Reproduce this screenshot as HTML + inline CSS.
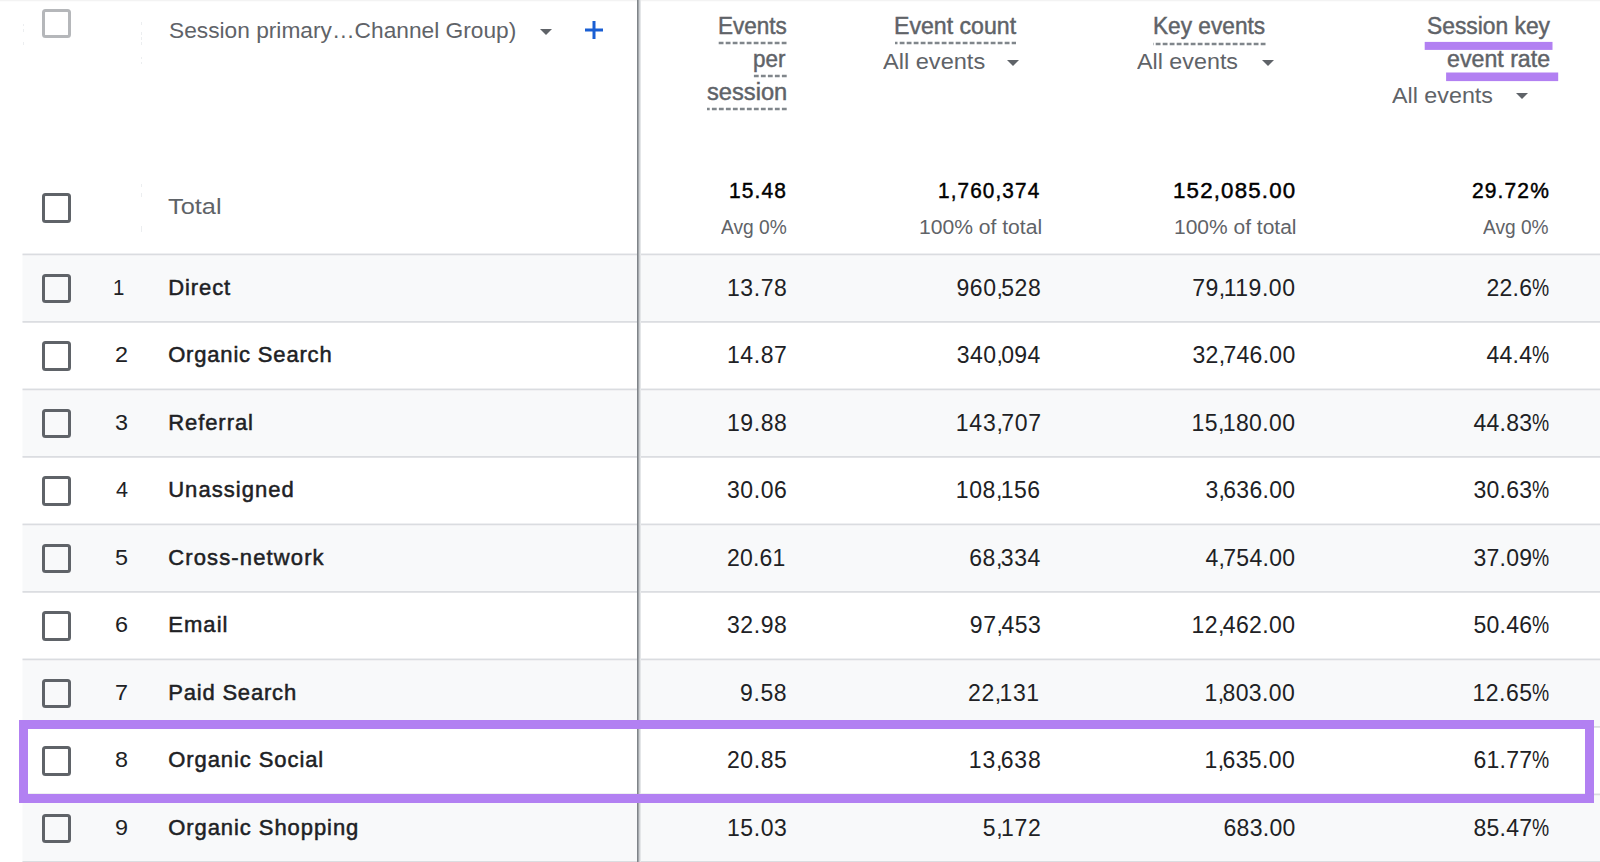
<!DOCTYPE html>
<html><head><meta charset="utf-8"><style>
html,body{margin:0;padding:0;}
body{width:1600px;height:862px;position:relative;overflow:hidden;background:#fff;font-family:"Liberation Sans", sans-serif;}
.t{position:absolute;white-space:nowrap;}
.b{position:absolute;}
.cm{letter-spacing:-1.6px;}
.pc{display:inline-block;transform:scaleX(0.84);transform-origin:0 0;margin-right:-3.2px;}
</style></head><body>
<svg class="b" style="left:0;top:0" width="1600" height="862"><rect x="0" y="0" width="1600.00" height="1.30" fill="#f3f3f3"/></svg>
<svg class="b" style="left:0;top:0" width="1600" height="862" viewBox="0 0 1600 862"><rect x="22.5" y="254.40" width="1577.5" height="67.5" fill="#f8f9fa"/><rect x="22.5" y="389.40" width="1577.5" height="67.5" fill="#f8f9fa"/><rect x="22.5" y="524.40" width="1577.5" height="67.5" fill="#f8f9fa"/><rect x="22.5" y="659.40" width="1577.5" height="67.5" fill="#f8f9fa"/><rect x="22.5" y="794.40" width="1577.5" height="67.5" fill="#f8f9fa"/><rect x="22.5" y="253.55" width="1577.5" height="1.7" fill="#dadce0"/><rect x="22.5" y="321.05" width="1577.5" height="1.7" fill="#dadce0"/><rect x="22.5" y="388.55" width="1577.5" height="1.7" fill="#dadce0"/><rect x="22.5" y="456.05" width="1577.5" height="1.7" fill="#dadce0"/><rect x="22.5" y="523.55" width="1577.5" height="1.7" fill="#dadce0"/><rect x="22.5" y="591.05" width="1577.5" height="1.7" fill="#dadce0"/><rect x="22.5" y="658.55" width="1577.5" height="1.7" fill="#dadce0"/><rect x="22.5" y="726.05" width="1577.5" height="1.7" fill="#dadce0"/><rect x="22.5" y="793.55" width="1577.5" height="1.7" fill="#dadce0"/><rect x="22.5" y="861.05" width="1577.5" height="1.7" fill="#dadce0"/></svg>
<div class="b" style="left:637px;top:0px;width:4.00px;height:862.00px;background:linear-gradient(90deg,#7f8489 0 1px,#a2a6aa 1px 2px,#cdd0d3 2px 3px,#e4e6e8 3px 4px);"></div>
<div class="b" style="left:41.8px;top:8.8px;width:29.50px;height:29.50px;border:3px solid #b5b7ba;border-radius:3.5px;box-sizing:border-box;"></div>
<svg class="b" style="left:540.3px;top:29px" width="12" height="6" viewBox="0 0 12 6"><path d="M0 0H12L6.0 6Z" fill="#5f6368"/></svg>
<svg class="b" style="left:584px;top:20px" width="20" height="20" viewBox="0 0 20 20"><path d="M10 1V19M1 10H19" stroke="#1a5fd3" stroke-width="3"/></svg>
<svg class="b" style="left:717.40px;top:40.30px" width="69.50" height="6" viewBox="0 0 69.50 6"><line x1="69.50" y1="3" x2="0" y2="3" stroke="#80868b" stroke-width="2.5" stroke-dasharray="4.8 2.2"/></svg>
<svg class="b" style="left:753.20px;top:73.20px" width="33.70" height="6" viewBox="0 0 33.70 6"><line x1="33.70" y1="3" x2="0" y2="3" stroke="#80868b" stroke-width="2.5" stroke-dasharray="4.8 2.2"/></svg>
<svg class="b" style="left:707.20px;top:106.20px" width="79.70" height="6" viewBox="0 0 79.70 6"><line x1="79.70" y1="3" x2="0" y2="3" stroke="#80868b" stroke-width="2.5" stroke-dasharray="4.8 2.2"/></svg>
<svg class="b" style="left:894.50px;top:40.30px" width="121.50" height="6" viewBox="0 0 121.50 6"><line x1="121.50" y1="3" x2="0" y2="3" stroke="#80868b" stroke-width="2.5" stroke-dasharray="4.8 2.2"/></svg>
<svg class="b" style="left:1007px;top:60.2px" width="12" height="6" viewBox="0 0 12 6"><path d="M0 0H12L6.0 6Z" fill="#5f6368"/></svg>
<svg class="b" style="left:1153.00px;top:40.50px" width="112.50" height="6" viewBox="0 0 112.50 6"><line x1="112.50" y1="3" x2="0" y2="3" stroke="#80868b" stroke-width="2.5" stroke-dasharray="4.8 2.2"/></svg>
<svg class="b" style="left:1261.7px;top:60.2px" width="12" height="6" viewBox="0 0 12 6"><path d="M0 0H12L6.0 6Z" fill="#5f6368"/></svg>
<svg class="b" style="left:0;top:0" width="1600" height="862"><rect x="1424.7" y="41.9" width="127.80" height="8.00" fill="#b280f2"/></svg>
<svg class="b" style="left:0;top:0" width="1600" height="862"><rect x="1446.1" y="72.5" width="112.10" height="8.60" fill="#b280f2"/></svg>
<svg class="b" style="left:1516px;top:93.2px" width="12" height="6" viewBox="0 0 12 6"><path d="M0 0H12L6.0 6Z" fill="#5f6368"/></svg>
<div class="b" style="left:22.5px;top:24px;width:1.00px;height:2.00px;background:#eceef0;"></div>
<div class="b" style="left:22.5px;top:29px;width:1.00px;height:3.00px;background:#eceef0;"></div>
<div class="b" style="left:22.5px;top:42px;width:1.00px;height:3.00px;background:#eceef0;"></div>
<div class="b" style="left:141px;top:22px;width:1.00px;height:3.00px;background:#eceef0;"></div>
<div class="b" style="left:141px;top:32px;width:1.00px;height:3.00px;background:#eceef0;"></div>
<div class="b" style="left:141px;top:37px;width:1.00px;height:3.00px;background:#eceef0;"></div>
<div class="b" style="left:141px;top:42px;width:1.00px;height:3.00px;background:#eceef0;"></div>
<div class="b" style="left:141px;top:57px;width:1.00px;height:2.00px;background:#eceef0;"></div>
<div class="b" style="left:141px;top:62px;width:1.00px;height:2.00px;background:#eceef0;"></div>
<div class="b" style="left:141px;top:184px;width:1.00px;height:3.00px;background:#eceef0;"></div>
<div class="b" style="left:141px;top:193px;width:1.00px;height:4.00px;background:#eceef0;"></div>
<div class="b" style="left:141px;top:226px;width:1.00px;height:6.00px;background:#eceef0;"></div>
<div class="b" style="left:41.6px;top:193px;width:29.50px;height:29.50px;border:3px solid #5f6368;border-radius:3.5px;box-sizing:border-box;"></div>
<div class="b" style="left:41.5px;top:273.5px;width:29.50px;height:29.50px;border:3px solid #5f6368;border-radius:3.5px;box-sizing:border-box;"></div>
<div class="b" style="left:41.5px;top:341.0px;width:29.50px;height:29.50px;border:3px solid #5f6368;border-radius:3.5px;box-sizing:border-box;"></div>
<div class="b" style="left:41.5px;top:408.5px;width:29.50px;height:29.50px;border:3px solid #5f6368;border-radius:3.5px;box-sizing:border-box;"></div>
<div class="b" style="left:41.5px;top:476.0px;width:29.50px;height:29.50px;border:3px solid #5f6368;border-radius:3.5px;box-sizing:border-box;"></div>
<div class="b" style="left:41.5px;top:543.5px;width:29.50px;height:29.50px;border:3px solid #5f6368;border-radius:3.5px;box-sizing:border-box;"></div>
<div class="b" style="left:41.5px;top:611.0px;width:29.50px;height:29.50px;border:3px solid #5f6368;border-radius:3.5px;box-sizing:border-box;"></div>
<div class="b" style="left:41.5px;top:678.5px;width:29.50px;height:29.50px;border:3px solid #5f6368;border-radius:3.5px;box-sizing:border-box;"></div>
<div class="b" style="left:41.5px;top:746.0px;width:29.50px;height:29.50px;border:3px solid #5f6368;border-radius:3.5px;box-sizing:border-box;"></div>
<div class="b" style="left:41.5px;top:813.5px;width:29.50px;height:29.50px;border:3px solid #5f6368;border-radius:3.5px;box-sizing:border-box;"></div>
<div class="t" id="t0" style="left:169.39px;top:19.65px;font-size:22.5px;line-height:22.5px;color:#5f6368;transform:scaleX(1.0099);transform-origin:0 0;">Session primary…Channel Group)</div>
<div class="t" id="t1" style="left:717.63px;top:14.63px;font-size:23px;line-height:23px;color:#5f6368;-webkit-text-stroke:0.45px #5f6368;transform:scaleX(0.9794);transform-origin:0 0;">Events</div>
<div class="t" id="t2" style="left:753.09px;top:47.83px;font-size:23px;line-height:23px;color:#5f6368;-webkit-text-stroke:0.45px #5f6368;transform:scaleX(0.9752);transform-origin:0 0;">per</div>
<div class="t" id="t3" style="left:707.31px;top:80.93px;font-size:23px;line-height:23px;color:#5f6368;-webkit-text-stroke:0.45px #5f6368;transform:scaleX(1.0290);transform-origin:0 0;">session</div>
<div class="t" id="t4" style="left:893.52px;top:14.73px;font-size:23px;line-height:23px;color:#5f6368;-webkit-text-stroke:0.45px #5f6368;transform:scaleX(1.0050);transform-origin:0 0;">Event count</div>
<div class="t" id="t5" style="left:882.82px;top:51.25px;font-size:22.5px;line-height:22.5px;color:#5f6368;transform:scaleX(1.0475);transform-origin:0 0;">All events</div>
<div class="t" id="t6" style="left:1152.83px;top:14.63px;font-size:23px;line-height:23px;color:#5f6368;-webkit-text-stroke:0.45px #5f6368;transform:scaleX(0.9858);transform-origin:0 0;">Key events</div>
<div class="t" id="t7" style="left:1137.02px;top:50.65px;font-size:22.5px;line-height:22.5px;color:#5f6368;transform:scaleX(1.0356);transform-origin:0 0;">All events</div>
<div class="t" id="t8" style="left:1426.50px;top:14.63px;font-size:23px;line-height:23px;color:#5f6368;-webkit-text-stroke:0.45px #5f6368;transform:scaleX(0.9919);transform-origin:0 0;">Session key</div>
<div class="t" id="t9" style="left:1447.39px;top:47.83px;font-size:23px;line-height:23px;color:#5f6368;-webkit-text-stroke:0.45px #5f6368;transform:scaleX(1.0079);transform-origin:0 0;">event rate</div>
<div class="t" id="t10" style="left:1391.54px;top:85.05px;font-size:22.5px;line-height:22.5px;color:#5f6368;transform:scaleX(1.0351);transform-origin:0 0;">All events</div>
<div class="t" id="t11" style="left:167.99px;top:195.75px;font-size:22.5px;line-height:22.5px;color:#5f6368;transform:scaleX(1.1266);transform-origin:0 0;">Total</div>
<div class="t" id="t12" style="left:728.78px;top:179.95px;font-size:22.5px;line-height:22.5px;color:#000;-webkit-text-stroke:0.45px #000;transform:scaleX(0.9324);transform-origin:0 0;letter-spacing:1.200px;">15.48</div>
<div class="t" id="t13" style="left:938.03px;top:179.95px;font-size:22.5px;line-height:22.5px;color:#000;-webkit-text-stroke:0.45px #000;transform:scaleX(0.9223);transform-origin:0 0;letter-spacing:1.200px;">1,760,374</div>
<div class="t" id="t14" style="left:1172.79px;top:179.95px;font-size:22.5px;line-height:22.5px;color:#000;-webkit-text-stroke:0.45px #000;transform:scaleX(0.9902);transform-origin:0 0;letter-spacing:1.200px;">152,085.00</div>
<div class="t" id="t15" style="left:1472.05px;top:179.95px;font-size:22.5px;line-height:22.5px;color:#000;-webkit-text-stroke:0.45px #000;transform:scaleX(0.9334);transform-origin:0 0;letter-spacing:1.200px;">29.72%</div>
<div class="t" id="t16" style="left:721.44px;top:217.07px;font-size:20px;line-height:20px;color:#5f6368;transform:scaleX(0.9585);transform-origin:0 0;">Avg 0%</div>
<div class="t" id="t17" style="left:919.17px;top:217.07px;font-size:20px;line-height:20px;color:#5f6368;transform:scaleX(1.0544);transform-origin:0 0;">100% of total</div>
<div class="t" id="t18" style="left:1173.79px;top:217.07px;font-size:20px;line-height:20px;color:#5f6368;transform:scaleX(1.0492);transform-origin:0 0;">100% of total</div>
<div class="t" id="t19" style="left:1483.33px;top:217.07px;font-size:20px;line-height:20px;color:#5f6368;transform:scaleX(0.9559);transform-origin:0 0;">Avg 0%</div>
<div class="t" id="t20" style="left:113.41px;top:276.50px;font-size:22.5px;line-height:22.5px;color:#202124;transform:scaleX(0.9050);transform-origin:0 0;">1</div>
<div class="t" id="t21" style="left:168.20px;top:276.92px;font-size:22px;line-height:22px;color:#202124;-webkit-text-stroke:0.5px #202124;letter-spacing:0.920px;">Direct</div>
<div class="t" id="t22" style="left:727.04px;top:276.68px;font-size:23px;line-height:23px;color:#202124;letter-spacing:0.550px;">13.78</div>
<div class="t" id="t23" style="left:956.46px;top:276.68px;font-size:23px;line-height:23px;color:#202124;letter-spacing:0.550px;">960<span class="cm">,</span>528</div>
<div class="t" id="t24" style="left:1192.18px;top:276.68px;font-size:23px;line-height:23px;color:#202124;letter-spacing:0.537px;">79<span class="cm">,</span>119.00</div>
<div class="t" id="t25" style="left:1486.47px;top:276.68px;font-size:23px;line-height:23px;color:#202124;letter-spacing:0.250px;">22.6<span class="pc">%</span></div>
<div class="t" id="t26" style="left:115.11px;top:344.00px;font-size:22.5px;line-height:22.5px;color:#202124;transform:scaleX(1.0392);transform-origin:0 0;">2</div>
<div class="t" id="t27" style="left:168.20px;top:344.42px;font-size:22px;line-height:22px;color:#202124;-webkit-text-stroke:0.5px #202124;letter-spacing:0.815px;">Organic Search</div>
<div class="t" id="t28" style="left:727.04px;top:344.18px;font-size:23px;line-height:23px;color:#202124;letter-spacing:0.550px;">14.87</div>
<div class="t" id="t29" style="left:956.86px;top:344.18px;font-size:23px;line-height:23px;color:#202124;letter-spacing:0.383px;">340<span class="cm">,</span>094</div>
<div class="t" id="t30" style="left:1192.46px;top:344.18px;font-size:23px;line-height:23px;color:#202124;letter-spacing:0.287px;">32<span class="cm">,</span>746.00</div>
<div class="t" id="t31" style="left:1486.47px;top:344.18px;font-size:23px;line-height:23px;color:#202124;letter-spacing:0.250px;">44.4<span class="pc">%</span></div>
<div class="t" id="t32" style="left:115.11px;top:411.50px;font-size:22.5px;line-height:22.5px;color:#202124;transform:scaleX(1.0392);transform-origin:0 0;">3</div>
<div class="t" id="t33" style="left:168.20px;top:411.92px;font-size:22px;line-height:22px;color:#202124;-webkit-text-stroke:0.5px #202124;letter-spacing:0.929px;">Referral</div>
<div class="t" id="t34" style="left:727.04px;top:411.68px;font-size:23px;line-height:23px;color:#202124;letter-spacing:0.550px;">19.88</div>
<div class="t" id="t35" style="left:955.86px;top:411.68px;font-size:23px;line-height:23px;color:#202124;letter-spacing:0.717px;">143<span class="cm">,</span>707</div>
<div class="t" id="t36" style="left:1191.46px;top:411.68px;font-size:23px;line-height:23px;color:#202124;letter-spacing:0.412px;">15<span class="cm">,</span>180.00</div>
<div class="t" id="t37" style="left:1473.47px;top:411.68px;font-size:23px;line-height:23px;color:#202124;letter-spacing:0.280px;">44.83<span class="pc">%</span></div>
<div class="t" id="t38" style="left:115.99px;top:479.00px;font-size:22.5px;line-height:22.5px;color:#202124;transform:scaleX(0.9592);transform-origin:0 0;">4</div>
<div class="t" id="t39" style="left:168.20px;top:479.42px;font-size:22px;line-height:22px;color:#202124;-webkit-text-stroke:0.5px #202124;letter-spacing:1.033px;">Unassigned</div>
<div class="t" id="t40" style="left:727.04px;top:479.18px;font-size:23px;line-height:23px;color:#202124;letter-spacing:0.550px;">30.06</div>
<div class="t" id="t41" style="left:955.86px;top:479.18px;font-size:23px;line-height:23px;color:#202124;letter-spacing:0.550px;">108<span class="cm">,</span>156</div>
<div class="t" id="t42" style="left:1205.45px;top:479.18px;font-size:23px;line-height:23px;color:#202124;letter-spacing:0.271px;">3<span class="cm">,</span>636.00</div>
<div class="t" id="t43" style="left:1473.47px;top:479.18px;font-size:23px;line-height:23px;color:#202124;letter-spacing:0.280px;">30.63<span class="pc">%</span></div>
<div class="t" id="t44" style="left:115.11px;top:546.50px;font-size:22.5px;line-height:22.5px;color:#202124;transform:scaleX(1.0392);transform-origin:0 0;">5</div>
<div class="t" id="t45" style="left:168.20px;top:546.92px;font-size:22px;line-height:22px;color:#202124;-webkit-text-stroke:0.5px #202124;letter-spacing:1.133px;">Cross-network</div>
<div class="t" id="t46" style="left:727.04px;top:546.68px;font-size:23px;line-height:23px;color:#202124;letter-spacing:0.175px;">20.61</div>
<div class="t" id="t47" style="left:969.24px;top:546.68px;font-size:23px;line-height:23px;color:#202124;letter-spacing:0.580px;">68<span class="cm">,</span>334</div>
<div class="t" id="t48" style="left:1205.45px;top:546.68px;font-size:23px;line-height:23px;color:#202124;letter-spacing:0.271px;">4<span class="cm">,</span>754.00</div>
<div class="t" id="t49" style="left:1473.47px;top:546.68px;font-size:23px;line-height:23px;color:#202124;letter-spacing:0.280px;">37.09<span class="pc">%</span></div>
<div class="t" id="t50" style="left:115.11px;top:614.00px;font-size:22.5px;line-height:22.5px;color:#202124;transform:scaleX(1.0392);transform-origin:0 0;">6</div>
<div class="t" id="t51" style="left:168.20px;top:614.42px;font-size:22px;line-height:22px;color:#202124;-webkit-text-stroke:0.5px #202124;letter-spacing:1.075px;">Email</div>
<div class="t" id="t52" style="left:727.04px;top:614.18px;font-size:23px;line-height:23px;color:#202124;letter-spacing:0.550px;">32.98</div>
<div class="t" id="t53" style="left:969.84px;top:614.18px;font-size:23px;line-height:23px;color:#202124;letter-spacing:0.580px;">97<span class="cm">,</span>453</div>
<div class="t" id="t54" style="left:1191.46px;top:614.18px;font-size:23px;line-height:23px;color:#202124;letter-spacing:0.412px;">12<span class="cm">,</span>462.00</div>
<div class="t" id="t55" style="left:1473.47px;top:614.18px;font-size:23px;line-height:23px;color:#202124;letter-spacing:0.280px;">50.46<span class="pc">%</span></div>
<div class="t" id="t56" style="left:115.11px;top:681.50px;font-size:22.5px;line-height:22.5px;color:#202124;transform:scaleX(1.0392);transform-origin:0 0;">7</div>
<div class="t" id="t57" style="left:168.20px;top:681.92px;font-size:22px;line-height:22px;color:#202124;-webkit-text-stroke:0.5px #202124;letter-spacing:0.810px;">Paid Search</div>
<div class="t" id="t58" style="left:740.03px;top:681.68px;font-size:23px;line-height:23px;color:#202124;letter-spacing:0.600px;">9.58</div>
<div class="t" id="t59" style="left:968.04px;top:681.68px;font-size:23px;line-height:23px;color:#202124;letter-spacing:0.580px;">22<span class="cm">,</span>131</div>
<div class="t" id="t60" style="left:1204.45px;top:681.68px;font-size:23px;line-height:23px;color:#202124;letter-spacing:0.414px;">1<span class="cm">,</span>803.00</div>
<div class="t" id="t61" style="left:1472.47px;top:681.68px;font-size:23px;line-height:23px;color:#202124;letter-spacing:0.480px;">12.65<span class="pc">%</span></div>
<div class="t" id="t62" style="left:115.11px;top:749.00px;font-size:22.5px;line-height:22.5px;color:#202124;transform:scaleX(1.0392);transform-origin:0 0;">8</div>
<div class="t" id="t63" style="left:168.20px;top:749.42px;font-size:22px;line-height:22px;color:#202124;-webkit-text-stroke:0.5px #202124;letter-spacing:0.923px;">Organic Social</div>
<div class="t" id="t64" style="left:727.04px;top:749.18px;font-size:23px;line-height:23px;color:#202124;letter-spacing:0.550px;">20.85</div>
<div class="t" id="t65" style="left:968.84px;top:749.18px;font-size:23px;line-height:23px;color:#202124;letter-spacing:0.780px;">13<span class="cm">,</span>638</div>
<div class="t" id="t66" style="left:1204.45px;top:749.18px;font-size:23px;line-height:23px;color:#202124;letter-spacing:0.414px;">1<span class="cm">,</span>635.00</div>
<div class="t" id="t67" style="left:1473.47px;top:749.18px;font-size:23px;line-height:23px;color:#202124;letter-spacing:0.280px;">61.77<span class="pc">%</span></div>
<div class="t" id="t68" style="left:115.11px;top:816.50px;font-size:22.5px;line-height:22.5px;color:#202124;transform:scaleX(1.0392);transform-origin:0 0;">9</div>
<div class="t" id="t69" style="left:168.20px;top:816.92px;font-size:22px;line-height:22px;color:#202124;-webkit-text-stroke:0.5px #202124;letter-spacing:0.933px;">Organic Shopping</div>
<div class="t" id="t70" style="left:727.04px;top:816.68px;font-size:23px;line-height:23px;color:#202124;letter-spacing:0.550px;">15.03</div>
<div class="t" id="t71" style="left:982.83px;top:816.68px;font-size:23px;line-height:23px;color:#202124;letter-spacing:0.625px;">5<span class="cm">,</span>172</div>
<div class="t" id="t72" style="left:1223.45px;top:816.68px;font-size:23px;line-height:23px;color:#202124;letter-spacing:0.320px;">683.00</div>
<div class="t" id="t73" style="left:1473.47px;top:816.68px;font-size:23px;line-height:23px;color:#202124;letter-spacing:0.280px;">85.47<span class="pc">%</span></div>
<div class="b" style="left:19px;top:720px;width:1575.00px;height:83.00px;border:9px solid #b280f2;box-sizing:border-box;"></div>
</body></html>
